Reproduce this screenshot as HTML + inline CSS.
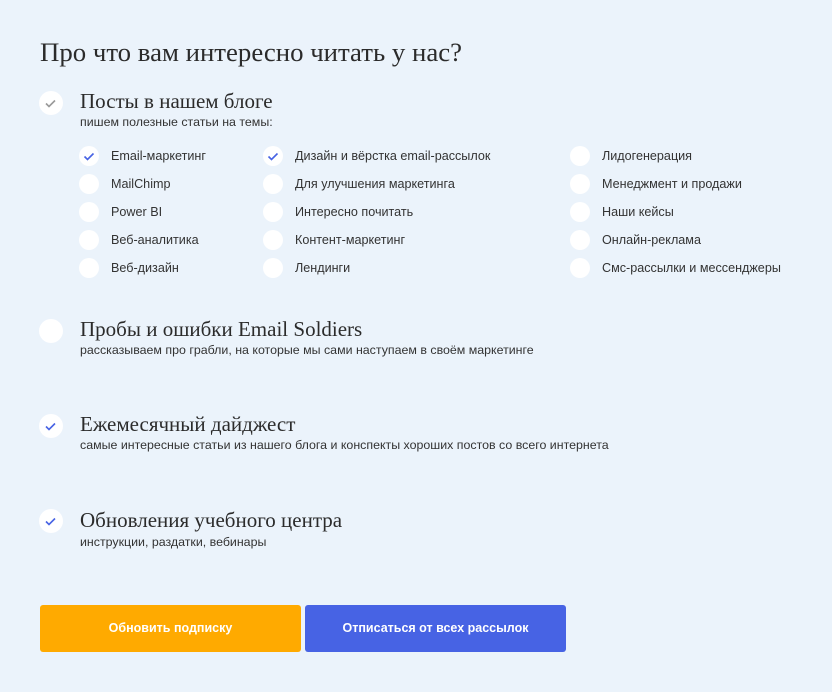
<!DOCTYPE html><html><head><meta charset="utf-8"><style>
body{margin:0;width:832px;height:692px;background:#ebf3fb;font-family:"Liberation Sans",sans-serif;position:relative;overflow:hidden;color:#333}
.a{position:absolute;white-space:nowrap}
.t{font-family:"Liberation Serif",serif;font-size:26.8px;color:#2b2b2b;left:40px;top:37px}
.bc{position:absolute;width:24px;height:24px;border-radius:50%;background:#fff;left:39px}
.sc{position:absolute;width:20px;height:20px;border-radius:50%;background:#fff}
.h{font-family:"Liberation Serif",serif;font-size:21px;color:#2b2b2b;left:80px}
.s{font-size:12.4px;color:#333;left:80px}
.i{font-size:12.6px;color:#333}
svg{position:absolute;left:0;top:0}
.btn{position:absolute;top:605px;height:47px;width:261px;border-radius:3px;color:#fff;font-weight:bold;font-size:12.5px;text-align:center;line-height:47px}
</style></head><body>
<div class="a t">Про что вам интересно читать у нас?</div>

<div class="bc" style="top:91px"><svg width="24" height="24"><path d="M7 12.5l3 3 6-6" stroke="#999" stroke-width="1.6" fill="none"/></svg></div>
<div class="a h" style="top:89px">Посты в нашем блоге</div>
<div class="a s" style="top:115px">пишем полезные статьи на темы:</div>

<div class="sc" style="left:79px;top:146px"><svg width="20" height="20"><path d="M5.5 10.5l3 3 6-6" stroke="#4763e4" stroke-width="1.6" fill="none"/></svg></div>
<div class="sc" style="left:79px;top:174px"></div>
<div class="sc" style="left:79px;top:202px"></div>
<div class="sc" style="left:79px;top:230px"></div>
<div class="sc" style="left:79px;top:258px"></div>
<div class="sc" style="left:263px;top:146px"><svg width="20" height="20"><path d="M5.5 10.5l3 3 6-6" stroke="#4763e4" stroke-width="1.6" fill="none"/></svg></div>
<div class="sc" style="left:263px;top:174px"></div>
<div class="sc" style="left:263px;top:202px"></div>
<div class="sc" style="left:263px;top:230px"></div>
<div class="sc" style="left:263px;top:258px"></div>
<div class="sc" style="left:570px;top:146px"></div>
<div class="sc" style="left:570px;top:174px"></div>
<div class="sc" style="left:570px;top:202px"></div>
<div class="sc" style="left:570px;top:230px"></div>
<div class="sc" style="left:570px;top:258px"></div>

<div class="a i" style="left:111px;top:149px">Email-маркетинг</div>
<div class="a i" style="left:111px;top:177px">MailChimp</div>
<div class="a i" style="left:111px;top:205px">Power BI</div>
<div class="a i" style="left:111px;top:233px">Веб-аналитика</div>
<div class="a i" style="left:111px;top:261px">Веб-дизайн</div>
<div class="a i" style="left:295px;top:149px">Дизайн и вёрстка email-рассылок</div>
<div class="a i" style="left:295px;top:177px">Для улучшения маркетинга</div>
<div class="a i" style="left:295px;top:205px">Интересно почитать</div>
<div class="a i" style="left:295px;top:233px">Контент-маркетинг</div>
<div class="a i" style="left:295px;top:261px">Лендинги</div>
<div class="a i" style="left:602px;top:149px">Лидогенерация</div>
<div class="a i" style="left:602px;top:177px">Менеджмент и продажи</div>
<div class="a i" style="left:602px;top:205px">Наши кейсы</div>
<div class="a i" style="left:602px;top:233px">Онлайн-реклама</div>
<div class="a i" style="left:602px;top:261px">Смс-рассылки и мессенджеры</div>

<div class="bc" style="top:319px"></div>
<div class="a h" style="top:317px">Пробы и ошибки Email Soldiers</div>
<div class="a s" style="top:343px">рассказываем про грабли, на которые мы сами наступаем в своём маркетинге</div>

<div class="bc" style="top:414px"><svg width="24" height="24"><path d="M7 12.5l3 3 6-6" stroke="#4763e4" stroke-width="1.6" fill="none"/></svg></div>
<div class="a h" style="top:412px">Ежемесячный дайджест</div>
<div class="a s" style="top:438px">самые интересные статьи из нашего блога и конспекты хороших постов со всего интернета</div>

<div class="bc" style="top:509px"><svg width="24" height="24"><path d="M7 12.5l3 3 6-6" stroke="#4763e4" stroke-width="1.6" fill="none"/></svg></div>
<div class="a h" style="top:508px">Обновления учебного центра</div>
<div class="a s" style="top:535px">инструкции, раздатки, вебинары</div>

<div class="btn" style="left:40px;background:#ffaa00">Обновить подписку</div>
<div class="btn" style="left:305px;background:#4763e4">Отписаться от всех рассылок</div>
</body></html>
